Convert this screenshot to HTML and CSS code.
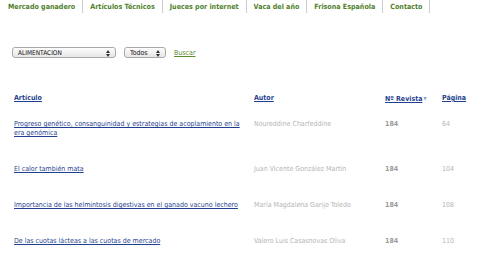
FILE: index.html
```html
<!DOCTYPE html>
<html lang="es">
<head>
<meta charset="utf-8">
<link rel="stylesheet" href="styles.css">
</head>
<body>
<nav class="nav">
  <a href="#">Mercado ganadero</a>
  <a href="#">Artículos Técnicos</a>
  <a href="#">Jueces por internet</a>
  <a href="#">Vaca del año</a>
  <a href="#">Frisona Española</a>
  <a href="#">Contacto</a>
</nav>
<form class="filters">
  <span class="select wide">ALIMENTACION<svg class="arrows" viewBox="0 0 4 7" width="4" height="7"><path d="M0 3 L2 0 L4 3 Z M0 4 L2 7 L4 4 Z" fill="#333"/></svg></span>
  <span class="select narrow">Todos<svg class="arrows" viewBox="0 0 4 7" width="4" height="7"><path d="M0 3 L2 0 L4 3 Z M0 4 L2 7 L4 4 Z" fill="#333"/></svg></span>
  <a href="#" class="buscar">Buscar</a>
</form>
<table class="articles">
  <thead>
    <tr>
      <th class="c-title"><a href="#">Artículo</a></th>
      <th class="c-author"><a href="#">Autor</a></th>
      <th class="c-rev"><a href="#">Nº Revista</a><span class="sort">▼</span></th>
      <th class="c-page"><a href="#">Página</a></th>
    </tr>
  </thead>
  <tbody>
    <tr>
      <td class="c-title"><a href="#">Progreso genético, consanguinidad y estrategias de acoplamiento en la era genómica</a></td>
      <td class="c-author">Noureddine Charfeddine</td>
      <td class="c-rev">184</td>
      <td class="c-page">64</td>
    </tr>
    <tr>
      <td class="c-title"><a href="#">El calor también mata</a></td>
      <td class="c-author">Juan Vicente González Martín</td>
      <td class="c-rev">184</td>
      <td class="c-page">104</td>
    </tr>
    <tr>
      <td class="c-title"><a href="#">Importancia de las helmintosis digestivas en el ganado vacuno lechero</a></td>
      <td class="c-author">María Magdalena Garijo Toledo</td>
      <td class="c-rev">184</td>
      <td class="c-page">108</td>
    </tr>
    <tr>
      <td class="c-title"><a href="#">De las cuotas lácteas a las cuotas de mercado</a></td>
      <td class="c-author">Valero Luis Casasnovas Oliva</td>
      <td class="c-rev">184</td>
      <td class="c-page">110</td>
    </tr>
  </tbody>
</table>
</body>
</html>
```

FILE: styles.css
```css
* { box-sizing: border-box; }
html, body { margin: 0; padding: 0; background: #fff; }
body {
  font-family: "DejaVu Sans", Verdana, sans-serif;
  font-stretch: condensed;
  font-size: 7px;
  color: #b5b5b5;
}
.nav {
  display: flex;
  height: 13px;
  padding-left: 1px;
  white-space: nowrap;
}
.nav a {
  display: flex;
  align-items: center;
  padding: 0 7px;
  border-right: 1px solid #ccc;
  color: #4f7f2c;
  font-weight: bold;
  font-size: 7.1px;
  text-decoration: none;
  height: 13px;
}
.filters {
  display: flex;
  align-items: center;
  gap: 8px;
  margin: 33px 0 0 12px;
  height: 13px;
  white-space: nowrap;
}
.select {
  position: relative;
  display: flex;
  align-items: center;
  height: 11px;
  border: 1px solid #a8a8a8;
  border-radius: 3px;
  background: linear-gradient(#fdfdfd, #e6e6e6);
  color: #111;
  font-size: 6.5px;
  padding-left: 5px;
}
.select.wide { width: 104px; }
.select.narrow { width: 42px; font-size: 7px; padding-left: 5px; }
.arrows {
  position: absolute;
  right: 5px;
  top: 1.5px;
}
.buscar {
  color: #5a8a33;
  font-size: 7px;
  text-decoration: underline;
}
.articles {
  border-collapse: collapse;
  margin: 35px 0 0 10px;
  width: 466px;
  line-height: 9px;
}
.articles th, .articles td {
  text-align: left;
  vertical-align: top;
  padding: 0 4px;
  white-space: normal;
}
.articles th { padding-bottom: 16px; white-space: nowrap; }
.articles th a {
  color: #1f3f8f;
  font-weight: bold;
  text-decoration: underline;
}
.articles td { padding-bottom: 27px; }
.articles td a { color: #1f3f8f; text-decoration: underline; }
.c-title { width: 240px; }
.c-author { width: 131px; }
.c-rev { width: 57px; }
td.c-rev { font-weight: bold; color: #9a9a9a; }
.sort { font-size: 4.5px; color: #8899cc; margin-left: 1px; vertical-align: 1px; }
```
